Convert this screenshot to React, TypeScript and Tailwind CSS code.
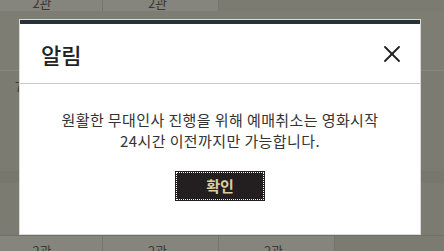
import { X } from 'lucide-react'

const font = { fontFamily: '"Noto Sans CJK KR", "Noto Sans", sans-serif' }

function Cell({ label, className = '' }: { label: string; className?: string }) {
  return (
    <div className={`flex justify-center border-r border-[#74746c] bg-[#85857e] text-[13px] text-[#3a3a36] ${className}`}>
      {label}
    </div>
  )
}

export default function App() {
  return (
    <div className="relative h-[251px] w-[444px] overflow-hidden bg-[#7b7b71]" style={font}>
      {/* table behind the dim layer */}
      <div className="flex h-[11px] items-end">
        <Cell label="2관" className="w-[103px] h-[11px] pr-[18px] leading-[6px]" />
        <Cell label="2관" className="w-[116px] h-[11px] pr-[6px] leading-[6px]" />
      </div>
      <div className="h-[60px] border-b border-[#888880] bg-[#7d7d74]" />
      <div className="flex h-[100px] items-start bg-[#7b7b71] pl-[15px] pt-[6px] text-[13px] text-[#3a3a36]">7</div>
      <div className="h-[12px] bg-[#77776d]" />
      <div className="h-[52px] bg-[#7b7b71]" />
      <div className="flex h-[16px] border-t border-[#6f6f67]">
        <Cell label="2관" className="w-[103px] pr-[18px] leading-[30px]" />
        <Cell label="2관" className="w-[116px] pr-[6px] leading-[30px]" />
        <Cell label="2관" className="w-[116px] pr-[6px] leading-[30px]" />
      </div>

      {/* alert modal */}
      <div className="absolute left-[20px] top-[20px] flex h-[214px] w-[400px] flex-col border-t-4 border-[#263238] bg-white shadow-[0_0_0_1px_#d9d9d9]">
        <div className="flex h-[60px] items-center justify-between border-b border-[#c9c9c9] pl-[21px] pr-[14px]">
          <h2 className="text-[22px] font-medium leading-none text-[#222]">알림</h2>
          <X className="h-[28px] w-[28px] text-[#222]" strokeWidth={1.6} />
        </div>
        <div className="flex flex-col items-center pt-[25px]">
          <p className="text-center text-[15px] leading-[21px] tracking-[0.4px] text-[#333]">
            원활한 무대인사 진행을 위해 예매취소는 영화시작
            <br />
            24시간 이전까지만 가능합니다.
          </p>
          <button className="mt-[20px] flex h-[30px] w-[90px] items-center justify-center border border-[#231f20] bg-[#231f20] text-[15px] font-bold text-[#dccca2] outline-1 outline-dotted -outline-offset-2 outline-white">
            확인
          </button>
        </div>
      </div>
    </div>
  )
}
